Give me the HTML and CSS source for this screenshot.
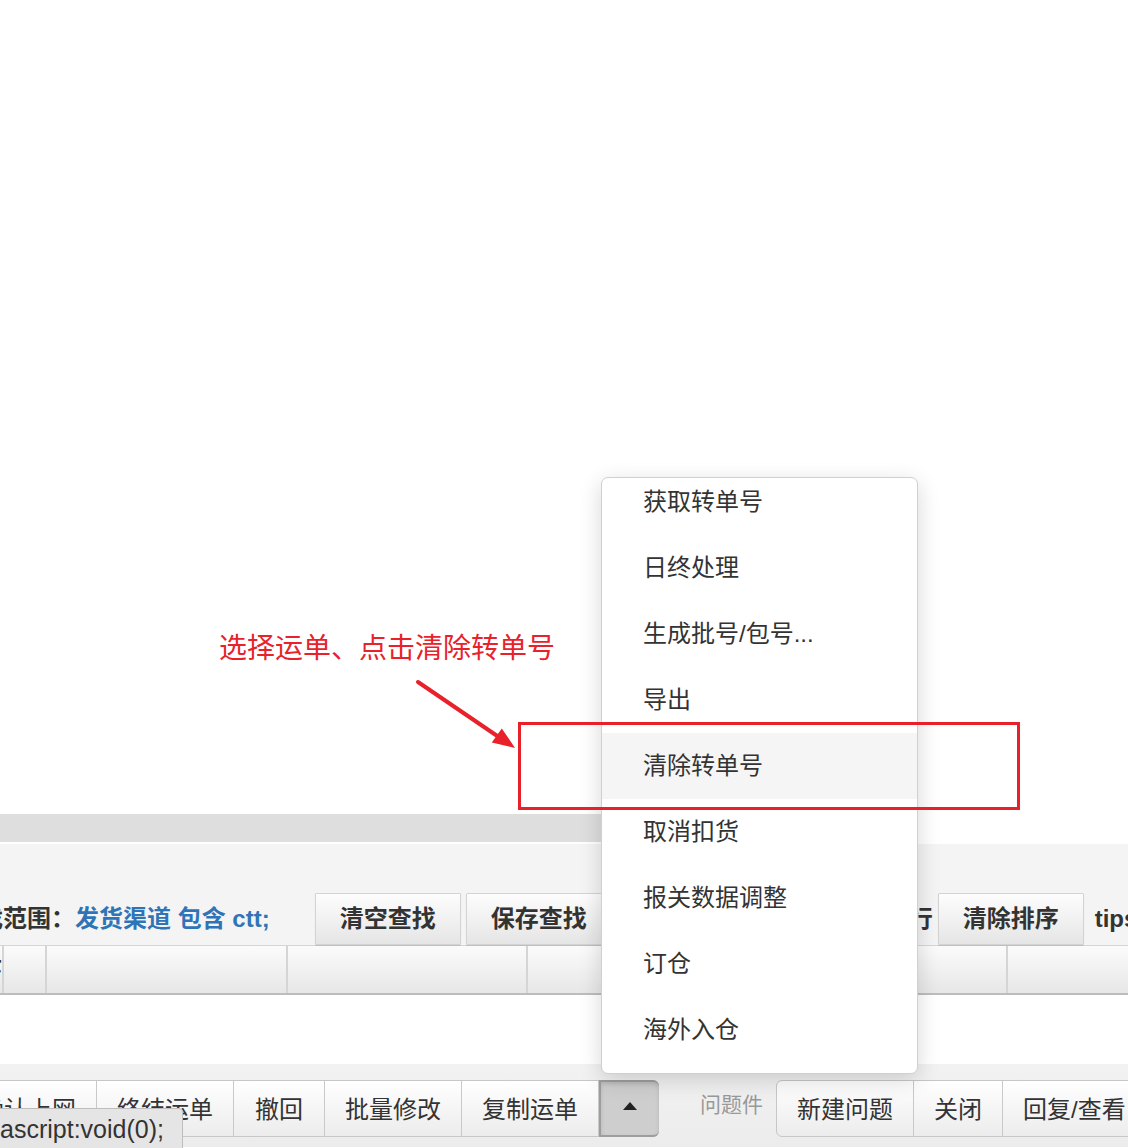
FILE: index.html
```html
<!DOCTYPE html>
<html lang="zh-CN">
<head>
<meta charset="utf-8">
<title>运单列表</title>
<link rel="stylesheet" href="styles.css">
</head>
<body>
<div class="page">
  <div class="blank"></div>
  <div class="hscroll"></div>
  <div class="search-panel">
    <div class="search-row">
      <span class="scope-label">查找范围：</span>
      <span class="scope-value">发货渠道 包含 ctt;</span>
      <button class="sbtn gap-lg">清空查找</button>
      <button class="sbtn gap-sm">保存查找</button>
      <span class="rows-info">每页显示50行</span>
      <button class="sbtn gap-sm">清除排序</button>
      <span class="tips">tips：</span>
    </div>
  </div>
  <div class="grid-head">
    <div class="hcell c0"><span>序</span></div>
    <div class="hcell c1"></div>
    <div class="hcell c2"></div>
    <div class="hcell c3"></div>
    <div class="hcell c4"></div>
    <div class="hcell c5"></div>
    <div class="hcell c6"></div>
  </div>
  <div class="grid-body"></div>
  <div class="action-bar">
    <div class="btn-group lead-group">
      <button class="abtn">确认上网</button>
      <button class="abtn">终结运单</button>
      <button class="abtn wide-pad">撤回</button>
      <button class="abtn">批量修改</button>
      <button class="abtn">复制运单</button>
      <button class="abtn toggle" aria-label="更多">
        <svg width="16" height="10" viewBox="0 0 16 10"><polygon points="8,1 15,9 1,9" fill="#222"/></svg>
      </button>
    </div>
    <span class="group-label">问题件</span>
    <div class="btn-group">
      <button class="abtn">新建问题</button>
      <button class="abtn">关闭</button>
      <button class="abtn">回复/查看</button>
    </div>
  </div>

  <ul class="dropdown">
    <li class="first">获取转单号</li>
    <li>日终处理</li>
    <li>生成批号/包号...</li>
    <li>导出</li>
    <li class="active">清除转单号</li>
    <li>取消扣货</li>
    <li>报关数据调整</li>
    <li>订仓</li>
    <li>海外入仓</li>
  </ul>

  <div class="highlight-box"></div>
  <div class="annotation">选择运单、点击清除转单号</div>
  <svg class="arrow" width="115" height="80" viewBox="0 0 115 80">
    <line x1="8" y1="7" x2="88" y2="61.5" stroke="#e8212b" stroke-width="4" stroke-linecap="round"/>
    <polygon points="105,73 81.8,67.6 91.8,53.4" fill="#e8212b"/>
  </svg>

  <div class="status-tip">ascript:void(0);</div>
</div>
</body>
</html>
```

FILE: styles.css
```css
* {
  box-sizing: border-box;
}

html,
body {
  margin: 0;
  padding: 0;
  background: #ffffff;
}

body {
  font-family: "Liberation Sans", "Noto Sans CJK SC", sans-serif;
  color: #333333;
}

.page {
  position: relative;
  width: 1128px;
  height: 1148px;
  overflow: hidden;
  background: #ffffff;
}

.blank {
  height: 814px;
}

.hscroll {
  width: 760px;
  height: 28px;
  background: #dedede;
  margin-bottom: 2px;
}

/* search panel */
.search-panel {
  height: 101px;
  padding-top: 49px;
  background: #f4f4f4;
}

.search-row {
  display: flex;
  align-items: center;
  height: 52px;
  white-space: nowrap;
}

.scope-label {
  flex: none;
  margin-left: -45px;
  font-size: 24px;
  font-weight: bold;
  color: #333333;
  line-height: 30px;
}

.scope-value {
  flex: none;
  margin-left: 0;
  font-size: 24px;
  font-weight: bold;
  color: #2f74b7;
  line-height: 30px;
}

.sbtn {
  flex: none;
  height: 52px;
  padding: 0 24px;
  border: 1px solid #d3d3d3;
  border-radius: 1px;
  background: linear-gradient(#fdfdfd, #e5e5e5);
  box-shadow: 0 1px 1px rgba(0, 0, 0, 0.12);
  font-family: "Liberation Sans", "Noto Sans CJK SC", sans-serif;
  font-size: 24px;
  font-weight: bold;
  color: #333333;
  line-height: 50px;
}

.gap-lg {
  margin-left: 45px;
}

.gap-sm {
  margin-left: 5px;
}

.rows-info {
  flex: none;
  width: 321px;
  text-align: right;
  font-size: 24px;
  font-weight: bold;
  line-height: 30px;
}

.tips {
  flex: none;
  margin-left: 11px;
  font-size: 24px;
  font-weight: bold;
  line-height: 30px;
}

/* grid header */
.grid-head {
  display: flex;
  height: 50px;
  border-top: 1px solid #d6d6d6;
  border-bottom: 2px solid #bdbdbd;
  overflow: hidden;
  white-space: nowrap;
}

.hcell {
  flex: none;
  height: 100%;
  background: linear-gradient(#fbfbfb, #e7e7e7);
  border-right: 2px solid #d5d5d5;
  overflow: hidden;
}

.c0 {
  width: 4px;
  display: flex;
  justify-content: flex-end;
  align-items: center;
}

.c0 span {
  flex: none;
  font-size: 24px;
  font-weight: bold;
  line-height: 30px;
}

.c1 {
  width: 43px;
}

.c2 {
  width: 241px;
}

.c3,
.c4,
.c5,
.c6 {
  width: 240px;
}

.grid-body {
  height: 69px;
  background: #ffffff;
}

/* action bar */
.action-bar {
  display: flex;
  align-items: flex-start;
  height: 83px;
  padding-top: 16px;
  background: linear-gradient(#f2f2f2, #ececec);
  white-space: nowrap;
}

.btn-group {
  flex: none;
  display: flex;
  border: 1px solid #c7c7c7;
  border-radius: 6px;
  background: linear-gradient(#ffffff, #ececec);
}

.lead-group {
  margin-left: -41px;
}

.abtn {
  flex: none;
  height: 55px;
  padding: 2px 20px 0;
  border: 0;
  border-right: 1px solid #c9c9c9;
  background: transparent;
  font-family: "Liberation Sans", "Noto Sans CJK SC", sans-serif;
  font-size: 24px;
  color: #333333;
  line-height: 53px;
}

.abtn:last-child {
  border-right: 0;
}

.wide-pad {
  padding: 2px 21px 0;
}

.toggle {
  width: 60px;
  height: 57px;
  margin: -1px -1px -1px 0;
  padding: 0;
  display: flex;
  align-items: center;
  justify-content: center;
  background: #cecece;
  border: 2px solid #9d9d9d;
  border-radius: 0 6px 6px 0;
  box-shadow: inset 0 2px 4px rgba(0, 0, 0, 0.12);
}

.toggle svg {
  display: block;
  margin-top: -6px;
}

.group-label {
  flex: none;
  margin-left: 41px;
  margin-top: 10px;
  font-size: 21px;
  line-height: 30px;
  color: #999999;
}

.btn-group + .group-label + .btn-group {
  margin-left: 13px;
}

/* dropdown menu */
.dropdown {
  position: absolute;
  left: 601px;
  top: 477px;
  width: 317px;
  height: 597px;
  margin: 0;
  padding: 0 0 10px;
  list-style: none;
  background: #ffffff;
  border: 1px solid #d0d0d0;
  border-radius: 7px;
  box-shadow: 0 6px 22px rgba(0, 0, 0, 0.16);
  overflow: hidden;
}

.dropdown li {
  height: 66px;
  padding-left: 41px;
  font-size: 24px;
  line-height: 66px;
  color: #333333;
  white-space: nowrap;
}

.dropdown li.first {
  margin-top: -9px;
}

.dropdown li.active {
  background: #f5f5f5;
}

/* annotations */
.highlight-box {
  position: absolute;
  left: 518px;
  top: 722px;
  width: 502px;
  height: 88px;
  border: 3px solid #e8202a;
}

.annotation {
  position: absolute;
  left: 219px;
  top: 631px;
  font-size: 28px;
  line-height: 30px;
  color: #e8222b;
  white-space: nowrap;
  font-family: "Noto Sans CJK SC", sans-serif;
}

.arrow {
  position: absolute;
  left: 410px;
  top: 675px;
  overflow: visible;
}

.status-tip {
  position: absolute;
  left: -1px;
  top: 1108px;
  height: 42px;
  padding: 0 18px 0 0;
  background: #e5e5e5;
  border: 1px solid #bdbdbd;
  border-top-right-radius: 4px;
  font-family: "Liberation Sans", sans-serif;
  font-size: 25px;
  line-height: 40px;
  color: #333333;
  white-space: nowrap;
}
```
